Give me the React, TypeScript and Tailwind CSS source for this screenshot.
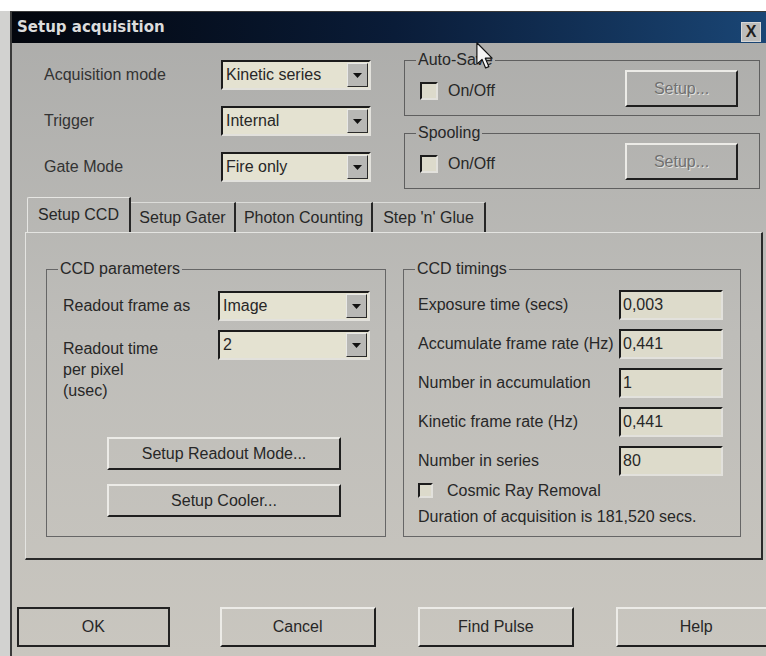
import React from "react";

const raised =
  "border-2 border-t-[#ecebe7] border-l-[#ecebe7] border-r-[#1f1f1f] border-b-[#1f1f1f]";
const sunken =
  "border-2 border-t-[#1c1c1c] border-l-[#1c1c1c] border-r-[#e2e1dc] border-b-[#e2e1dc]";

function Arrow() {
  return (
    <svg width="9" height="5" viewBox="0 0 9 5">
      <polygon points="0,0 9,0 4.5,5" fill="#111" />
    </svg>
  );
}

function Combo({ value, width }: { value: string; width: string }) {
  return (
    <div className={`flex h-[30px] ${width} ${sunken} bg-[#e4e2d1]`}>
      <div className="flex flex-1 items-center pl-[3px] leading-none">{value}</div>
      <div className="m-[1px] flex w-[21px] items-center justify-center border border-t-[#e8e8e6] border-l-[#e8e8e6] border-r-[#2a2a2a] border-b-[#2a2a2a] bg-[#b8b8b5]">
        <Arrow />
      </div>
    </div>
  );
}

function Field({ value }: { value: string }) {
  return (
    <div className={`flex h-[30px] w-[104px] items-center pl-[2px] leading-none ${sunken} bg-[#dddbcb]`}>
      {value}
    </div>
  );
}

function Check({ size }: { size: string }) {
  return <div className={`${size} shrink-0 ${sunken} bg-[#dcdacb]`} />;
}

function Group({ title }: { title: string }) {
  return (
    <fieldset className="h-[64px] border border-[#5f5f5f]">
      <legend className="ml-[11px] px-[2px] leading-[16px]">{title}</legend>
      <div className="flex items-start pl-[15px] pr-[21px]">
        <div className="mt-[14px] flex items-center">
          <Check size="h-[18px] w-[18px]" />
          <span className="ml-[10px] leading-none">On/Off</span>
        </div>
        <div
          className={`ml-auto mt-[2px] flex h-[37px] w-[113px] items-center justify-center ${raised} text-[#707070] [text-shadow:1px_1px_0_#e2e2e0]`}
        >
          Setup...
        </div>
      </div>
    </fieldset>
  );
}

const tabs = [
  { label: "Setup Gater", w: "w-[105px]" },
  { label: "Photon Counting", w: "w-[137px]" },
  { label: "Step 'n' Glue", w: "w-[113px]" },
];

const timings = [
  ["Exposure time (secs)", "0,003"],
  ["Accumulate frame rate (Hz)", "0,441"],
  ["Number in accumulation", "1"],
  ["Kinetic frame rate (Hz)", "0,441"],
  ["Number in series", "80"],
];

export default function App() {
  return (
    <div className="relative h-[656px] w-[766px] overflow-hidden bg-white font-['Liberation_Sans',Arial,sans-serif] text-[16px] text-[#272727]">
      <div className="h-[11px] bg-white" />
      <div className="flex">
        <div className="h-[645px] w-[10px] shrink-0 bg-[#d2d2d0]" />
        <div className="flex h-[645px] w-[766px] shrink-0 flex-col border-l-2 border-t border-[#3a3a3a] bg-linear-to-b from-[#acacaa] via-[#bebdb9] to-[#c9c6bf]">
          {/* caption */}
          <div className="flex h-[31px] items-center bg-linear-to-r from-[#03060d] via-[#0a1c38] to-[#1a4777] pl-[5px] pr-[15px]">
            <span className="font-['DejaVu_Sans',Verdana,sans-serif] text-[15px] font-bold text-[#dcdcdc]">
              Setup acquisition
            </span>
            <div className="ml-auto mt-[8px] flex h-[20px] w-[20px] items-center justify-center border border-[#d8d8d8] bg-[#bdbdbb] font-bold leading-none text-[#202020]">
              X
            </div>
          </div>

          {/* mode selectors and save groups */}
          <div className="flex pt-[9px]">
            <div className="flex w-[392px] flex-col gap-[16px] pl-[32px] pt-[8px]">
              <div className="flex h-[30px] items-center">
                <span className="w-[177px] text-[#333]">Acquisition mode</span>
                <Combo value="Kinetic series" width="w-[150px]" />
              </div>
              <div className="flex h-[30px] items-center">
                <span className="w-[177px] text-[#333]">Trigger</span>
                <Combo value="Internal" width="w-[150px]" />
              </div>
              <div className="flex h-[30px] items-center">
                <span className="w-[177px] text-[#333]">Gate Mode</span>
                <Combo value="Fire only" width="w-[150px]" />
              </div>
            </div>
            <div className="flex w-[356px] flex-col gap-[9px]">
              <Group title="Auto-Save" />
              <Group title="Spooling" />
            </div>
          </div>

          {/* tab strip */}
          <div className="ml-[15px] mt-[8px] flex h-[35px] items-end">
            <div className="flex h-[35px] w-[104px] items-center justify-center rounded-tl-[2px] border-l border-t border-[#e6e6e3] border-r-2 border-r-[#262626]">
              Setup CCD
            </div>
            {tabs.map((t) => (
              <div
                key={t.label}
                className={`flex h-[30px] ${t.w} items-center justify-center border-t border-[#dcdcd9] border-r-2 border-r-[#262626]`}
              >
                {t.label}
              </div>
            ))}
          </div>

          {/* tab page */}
          <div className="ml-[13px] mr-[13px] flex h-[328px] gap-[17px] border-l border-t border-[#e4e4e1] border-r-2 border-b-2 border-r-[#2a2a2a] border-b-[#2a2a2a] pl-[20px] pt-[28px]">
            <fieldset className="h-[276px] w-[340px] border border-[#666]">
              <legend className="ml-[11px] px-[2px] leading-[16px]">CCD parameters</legend>
              <div className="flex flex-col pl-[16px]">
                <div className="mt-[14px] flex h-[30px] items-center">
                  <span className="w-[155px]">Readout frame as</span>
                  <Combo value="Image" width="w-[152px]" />
                </div>
                <div className="mt-[9px] flex items-start">
                  <span className="mt-[8px] w-[155px] leading-[21px]">
                    Readout time
                    <br />
                    per pixel
                    <br />
                    (usec)
                  </span>
                  <Combo value="2" width="w-[152px]" />
                </div>
                <div className={`ml-[44px] mt-[36px] flex h-[33px] w-[234px] items-center justify-center ${raised}`}>
                  Setup Readout Mode...
                </div>
                <div className={`ml-[44px] mt-[14px] flex h-[33px] w-[234px] items-center justify-center ${raised}`}>
                  Setup Cooler...
                </div>
              </div>
            </fieldset>

            <fieldset className="h-[276px] w-[338px] border border-[#666]">
              <legend className="ml-[11px] px-[2px] leading-[16px]">CCD timings</legend>
              <div className="flex flex-col pl-[14px]">
                <div className="mt-[13px] flex flex-col gap-[9px]">
                  {timings.map(([label, value]) => (
                    <div key={label} className="flex h-[30px] items-center">
                      <span className="w-[201px] whitespace-nowrap">{label}</span>
                      <Field value={value} />
                    </div>
                  ))}
                </div>
                <div className="mt-[7px] flex h-[15px] items-center">
                  <Check size="h-[15px] w-[15px]" />
                  <span className="ml-[14px]">Cosmic Ray Removal</span>
                </div>
                <div className="mt-[9px] leading-[20px]">Duration of acquisition is 181,520 secs.</div>
              </div>
            </fieldset>
          </div>

          {/* dialog buttons */}
          <div className="mt-[47px] flex pl-[5px]">
            <div className="flex h-[40px] w-[153px] items-center justify-center border-2 border-[#232323]">
              OK
            </div>
            <div className={`ml-[50px] flex h-[40px] w-[156px] items-center justify-center ${raised}`}>
              Cancel
            </div>
            <div className={`ml-[42px] flex h-[40px] w-[157px] items-center justify-center ${raised}`}>
              Find Pulse
            </div>
            <div className={`ml-[42px] flex h-[40px] w-[160px] items-center justify-center ${raised}`}>
              Help
            </div>
          </div>
        </div>
      </div>

      {/* mouse pointer */}
      <svg className="absolute left-[476px] top-[42px]" width="18" height="28" viewBox="0 0 12 19">
        <path d="M0.5 0.5 L0.5 15 L4 11.8 L6.4 17.6 L8.6 16.7 L6.2 11 L10.8 11 Z" fill="#f4f4f4" stroke="#111" strokeWidth="0.8" strokeLinejoin="round" />
      </svg>
    </div>
  );
}
